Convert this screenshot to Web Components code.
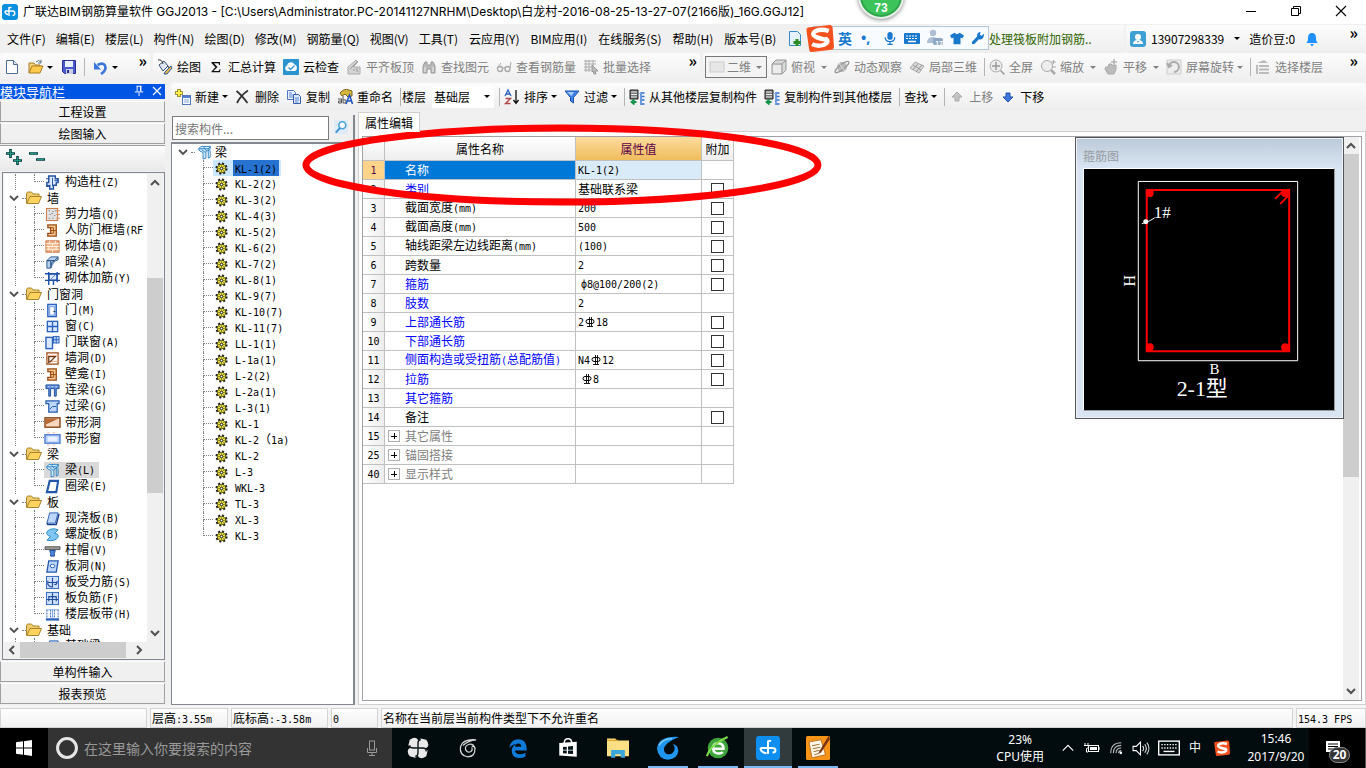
<!DOCTYPE html>
<html lang="zh-CN">
<head>
<meta charset="utf-8">
<title>广联达BIM钢筋算量软件 GGJ2013</title>
<style>
html,body{height:100%;margin:0}
body{font:12px/16px "Noto Sans CJK SC",sans-serif;color:#000;background:#f0f0f0;overflow:hidden}
</style>
</head>
<body>
<ggj-app></ggj-app>
<script>
const ICONS = {
app:'<rect width="16" height="16" rx="3" fill="#0b8fe0"/><path d="M7 3v9M3 7h7.500a2.300 2.300 0 0 1 0 4.600M9.500 3.500Q7 3 7 5.500M3 7q0 3 3 3.500" fill="none" stroke="#fff" stroke-width="1.400"/>',
doc:'<path d="M2.500 1.500h7l4 4v9h-11z" fill="#fff" stroke="#4a6a94"/><path d="M9.500 1.500v4h4" fill="#dbe7f5" stroke="#4a6a94"/>',
open:'<path d="M1 14V4h5l1.500 2H12v2" fill="#f7d57a" stroke="#a87a22"/><path d="M1 14l3-7h11l-3 7z" fill="#ffc94d" stroke="#a87a22"/><path d="M8 3q3-3 5 0M13 .800V4h-3" fill="none" stroke="#5d7486"/>',
save:'<path d="M1.500 1.500h13v13h-11l-2-2z" fill="#4a5bd0" stroke="#2b2f96"/><rect x="4" y="2" width="8" height="6" fill="#e8f0ff"/><rect x="5" y="10" width="7" height="5" fill="#c9cfe0"/><rect x="6" y="11" width="2" height="3" fill="#2b2f96"/>',
undo:'<path d="M8 15q6-4 4-8.500Q10 3 4.500 6" fill="none" stroke="#3b76d8" stroke-width="2.600"/><path d="M1 3v7.500h7z" fill="#3b76d8"/>',
draw:'<path d="M2 6l5-4 4 5-5 5z" fill="#dfe9f4" stroke="#3b4f70"/><path d="M1 1q4-1 5 4M11 7q2 2 1 5" fill="none" stroke="#333"/><path d="M8 13l6-6 1 2-5 6H7z" fill="#f0b93c" stroke="#265aa5"/>',
sigma:'<path d="M3.500 3h8.500v3h-.800L10.500 4.300H6L9.500 8 5.500 12h5.300l.900-1.800h.800L12 13.300H3.500V12.500L7.300 8.300 3.500 4z" fill="#111"/>',
cloud:'<rect width="16" height="16" rx="1" fill="#2c93d1"/><path d="M4 12a3 3 0 0 1 0-5.500 4 4 0 0 1 7.500-1A3.500 3.500 0 0 1 12 12z" fill="#fff"/><path d="M5.500 8.500l2 2 4-4" stroke="#2c93d1" fill="none" stroke-width="1.300"/>',
slab:'<path d="M2 8L10 1l2 2-5 5h7v7H2z" fill="#d4d4d4" stroke="#aaa"/><path d="M4 10l7-7M8 12v-2M11 13V9" stroke="#999"/>',
bino:'<path d="M2 14V7l2-4h2v3h4V3h2l2 4v7h-4v-4H6v4z" fill="#bbb" stroke="#999"/><path d="M4 8v5M12 8v5" stroke="#eee"/>',
glass:'<circle cx="4" cy="10" r="2.500" fill="none" stroke="#aaa" stroke-width="1.400"/><circle cx="11.500" cy="10" r="2.500" fill="none" stroke="#aaa" stroke-width="1.400"/><path d="M6.500 9h2.500M2 8l3-4M14 9l1-6" stroke="#aaa" fill="none"/>',
batch:'<path d="M1 2h12M1 5h12M1 8h8M1 11h7M3 1v12M6 1v12M10 1v6" stroke="#aaa" fill="none"/><path d="M9 6l6 6-3 0 1 3-2 0-1-3-1 1z" fill="#bbb" stroke="#999"/>',
flat:'<rect x="1" y="3" width="14" height="10" fill="#e6e6e6" stroke="#ccc"/>',
cube:'<path d="M1 5l4-4h10v10l-4 4H1z" fill="#d9d9d9" stroke="#999"/><path d="M1 5h10v10M11 5l4-4" stroke="#999" fill="none"/><rect x="2" y="6" width="8" height="8" fill="#ececec"/>',
orbit:'<circle cx="8" cy="8" r="5" fill="#bbb"/><ellipse cx="8" cy="8" rx="8.500" ry="2.500" transform="rotate(-38 8 8)" fill="none" stroke="#999" stroke-width="1.300"/><path d="M5 4l6 8" stroke="#ddd"/>',
part3d:'<path d="M1 9l5-6 9 4-5 7z" fill="#d8d8d8" stroke="#aaa"/><path d="M4 6l8 5M3.500 11l6-6.500M7 13l6-7" stroke="#999"/>',
full:'<circle cx="7" cy="7" r="6" fill="#eee" stroke="#aaa"/><path d="M7 3v8M3 7h8M11.500 11.500l4 4" stroke="#999" stroke-width="1.500"/>',
zoom:'<circle cx="7" cy="7" r="5.500" fill="#eee" stroke="#aaa"/><path d="M11 11l4 4" stroke="#aaa" stroke-width="2.500"/><path d="M11 3h5M13.500 1v4M12 8h4" stroke="#aaa"/>',
pan:'<path d="M2 10q0-3 3-2l1-3q3-1 4 2l3-1q1 4-2 9H5z" fill="#bbb" stroke="#aaa"/><path d="M11 0v6M8 3h6" stroke="#999"/>',
rot:'<path d="M1 1h14v14H1z" fill="#ededed" stroke="#ccc"/><path d="M3 7a5 5 0 1 1 5 6M1 4l2 4 3-2" fill="none" stroke="#aaa" stroke-width="2"/>',
floors:'<path d="M2 4l7-3 4 3zM4 6h10v2H4zM4 9.500h10v2H4zM4 13h10v2H4zM1 6h2v9H1z" fill="#bbb"/>',
add:'<path d="M4 0v8M0 4h8" stroke="#8a7a20" stroke-width="3.600"/><path d="M4 .800v6.400M.800 4h6.400" stroke="#fff04a" stroke-width="1.800"/><rect x="7.500" y="6.500" width="8" height="9" fill="#f4f8ff" stroke="#5078b8"/><path d="M8 8h7" stroke="#4a7ed0" stroke-width="2"/><path d="M9 11h5M9 13h5" stroke="#8aa8d8"/>',
del:'<path d="M1.500 2q5 4 11 12M13 1.500Q6 6 2 14" stroke="#333" stroke-width="1.800" fill="none"/>',
copy:'<path d="M1.500 1.500h6l2 2v7h-8z" fill="#e8f0ff" stroke="#4f78c4"/><path d="M7.500 5.500h5l2 2v7h-7z" fill="#dbe8ff" stroke="#355fae"/><path d="M3 4h3M3 6h4M3 8h4M9 9h4M9 11h4M9 13h3" stroke="#5d86d0"/>',
rename:'<path d="M3 4q4-5 9-3l3 1v5l-4 1-3-3-3 2z" fill="#d8b63c" stroke="#7a6420"/><path d="M1 10h3.500v4H1.500v-2H4M6 7v7h3v-3H6" fill="none" stroke="#555"/><path d="M9 15l3.500-9 3 9M10.500 12h4" fill="none" stroke="#2458c0" stroke-width="1.600"/>',
sort:'<path d="M1 7l3-6 3 6M2 5h4" fill="none" stroke="#2f62bd" stroke-width="1.300"/><path d="M1.500 9.500h5l-5 5h5" fill="none" stroke="#b04a4a" stroke-width="1.400"/><path d="M12 1v12M9.500 11l2.500 3.500L14.500 11" fill="none" stroke="#111" stroke-width="1.300"/>',
filter:'<path d="M1 2h14L9.500 8.500V14L6.500 12V8.500z" fill="#3b82e6" stroke="#1d54ac"/><path d="M3 3h7L7.500 7z" fill="#a9ccff"/>',
cpfrom:'<path d="M1 1h8v9H1z" fill="#777" stroke="#222"/><path d="M2 3h6M2 5.500h6M2 8h6" stroke="#eee"/><path d="M15.500 4H12v11h3.500M12 7.500h3.500M12 11h3.500" fill="none" stroke="#2d6fcb" stroke-width="1.700"/><path d="M9 5l3-1v11" stroke="#8fb8ee" fill="none"/><path d="M7.500 13H3M5.500 10.500L2.500 13l3 2.500" stroke="#169447" stroke-width="1.800" fill="none"/>',
up:'<path d="M8 3l5 5h-3v4H6V8H3z" fill="#c4c4c4" stroke="#aaa"/>',
down:'<path d="M8 13L3 8h3V4h4v4h3z" fill="#3f77e0" stroke="#2350aa"/>',
docadd:'<path d="M2.500 .500h8l3 3v11h-11z" fill="#e5f2ff" stroke="#3b8ac8"/><path d="M10 8v7M6.500 11.500h7" stroke="#2a8c22" stroke-width="3"/>',
user:'<rect width="16" height="16" rx="3" fill="#3d9fd2"/><circle cx="8" cy="6" r="3" fill="#fff"/><path d="M3 13q0-4 5-4t5 4z" fill="#fff"/><path d="M7 10l1 2 1-2" fill="#3d9fd2"/>',
bell:'<path d="M2 12q2-1 2-5 0-5 4-5t4 5q0 4 2 5z" fill="#1e90ff"/><path d="M6 13h4l-2 2.500z" fill="#1e90ff"/>',
beam:'<path d="M1.500 4l3-2.500h10l-1 4-4 1V14l-3 1V8L3 6.500z" fill="#d3ecfb" stroke="#2d83c4"/><path d="M2 4h10l2-2M12 4v10l2-1V6M5 5l4 3M7 2l3 4" fill="none" stroke="#2d83c4"/>',
gear:'<circle cx="8" cy="8" r="5.200" fill="none" stroke="#222" stroke-width="2.600" stroke-dasharray="2.040 2.040"/><circle cx="8" cy="8" r="4.500" fill="#f1e53c" stroke="#3a3a10" stroke-width=".900"/><path d="M8 4v8M4 8h8M5.200 5.200l5.600 5.600M10.800 5.200l-5.600 5.600" stroke="#6b6520" stroke-width=".700"/><circle cx="8" cy="8" r="1.400" fill="#fff" stroke="#222"/>',
folder:'<path d="M.500 13.500V3.500l1-1.500h4l1.500 2H13v3" fill="#f1cd6a" stroke="#a8842e"/><path d="M.800 13.500L4 6.500h11.500l-3 7z" fill="#ffd35e" stroke="#a8842e"/>',
column:'<path d="M4 1h7v3h3v4h-2v3H9v4H5v-3H2V8h2z" fill="#dfeafc" stroke="#22529f" stroke-width="1.500"/><path d="M1 4h4M1 11h5M10 6h5M8 3v9" stroke="#22529f"/>',
wall:'<rect x="1.500" y="1.500" width="12" height="13" fill="#e2e2e2" stroke="#c66f38"/><path d="M4 4h1M8 5h1M5 8h1M10 9h1M4 12h1M8 12h1M11 4h1M7 7h1" stroke="#555"/><path d="M12 4h4M12 8h4M12 12h4" stroke="#e28d58"/>',
frame:'<path d="M3 2h9v12H3v-3h3V5H3z" fill="#f6c590" stroke="#9a4d16" stroke-width="1.400"/><path d="M6 5h3M6 11h3M6 8h6M9 5v6" stroke="#9a4d16"/>',
brick:'<rect x="1" y="2" width="14" height="12" fill="#f3b485" stroke="#c46a34"/><path d="M1 5h14M1 8h14M1 11h14M5 2v3M11 2v3M8 5v3M4 8v3M12 8v3M8 11v3" stroke="#fff4e8"/>',
hbeam:'<path d="M2 6l4-4h8l-4 4zM2 6h8v0H6v8H2z" fill="#b7d2ee" stroke="#2a5488"/><path d="M6 14l1-1V8l7-3V2" fill="#7d9dc4" stroke="#2a5488"/>',
rein:'<path d="M0 3h16M0 10h16M4 1v14M9 8v7M13 1v11" stroke="#1d4fa8" stroke-width="1.500"/><rect x="4.500" y="3.500" width="8" height="6" fill="#dce8fb" stroke="#1d4fa8"/><path d="M6 9l5-5" stroke="#5d8ad8"/>',
door:'<rect x="3" y="1.500" width="9" height="13" fill="#cfe1fb" stroke="#2b62bd" stroke-width="1.500"/><rect x="5" y="4" width="5" height="9" fill="#fff" stroke="#6b98dd"/><path d="M9 9h2" stroke="#123"/>',
window:'<rect x="2.500" y="2.500" width="11" height="11" fill="#d7e8ff" stroke="#2b62bd" stroke-width="1.400"/><path d="M8 2v12M2 8h12" stroke="#2b62bd" stroke-width="1.400"/>',
doorwin:'<rect x="1" y="2.500" width="7" height="12" fill="#dbe9ff" stroke="#2b62bd" stroke-width="1.500"/><rect x="9" y="1.500" width="6" height="7" fill="#b3cff8" stroke="#2b62bd"/><path d="M12 1v8M9 5h6" stroke="#2b62bd"/>',
hole:'<rect x="2" y="2" width="12" height="12" fill="#fff" stroke="#a05420" stroke-width="1.400"/><path d="M1 5h14M1 11h14" stroke="#eaa277"/><path d="M4 13V6h8M5 12l6-6" fill="none" stroke="#6e3b18" stroke-width="1.400"/>',
lbeam:'<path d="M1 2h14v4h-3v8h-2V6H6v8H4V6H1z" fill="#5f8fd8" stroke="#1f4c9c"/><path d="M3 4h2M7 4h2M11 4h2" stroke="#cfe0ff"/>',
obeam:'<path d="M1 2h14v3h-2v9H4V5H1z" fill="#bcd5f8" stroke="#245bb0" stroke-width="1.300"/><path d="M5 11l3-3h4" fill="none" stroke="#245bb0"/>',
strip:'<rect x="0" y="3" width="16" height="10" fill="#f7d7bf" stroke="#8c4516" stroke-width="1.500"/><path d="M1 10L14 4v0H1z" fill="#b96a34"/>',
stripw:'<rect x="0" y="4" width="16" height="9" fill="#bcd2f8" stroke="#4f7fd6" stroke-width="1.500"/><rect x="3" y="6" width="10" height="5" fill="#eaf2ff"/><path d="M2 2h3M8 2h3M2 15h3M8 15h3" stroke="#f3b296"/>',
ring:'<path d="M5 2h9l-2 12H2z" fill="#fff" stroke="#2156a8" stroke-width="2.200"/>',
plate:'<path d="M5 2h9l-3 11H2z" fill="#bcd6fb" stroke="#2559b0"/><path d="M2 13l1 1.500h9L15 3" fill="none" stroke="#173f86" stroke-width="1.500"/>',
spiral:'<path d="M2 5q5-5 12-2l-4 4q5 0 4 4-4 5-12 3l4-4Q1 9 2 5z" fill="#7fc6f2" stroke="#2489c8"/>',
cap:'<path d="M0 4h16v3H0z" fill="#999" stroke="#555"/><path d="M5 8h6l-1 3v3H6v-3z" fill="#4f86dd" stroke="#1d4b9a"/>',
phole:'<path d="M4 2h10l-2 12H2z" fill="#bcd6fb" stroke="#2559b0" stroke-width="1.400"/><ellipse cx="8" cy="7.500" rx="2.500" ry="1.800" fill="#fff" stroke="#2559b0"/>',
force:'<rect x="1.500" y="1.500" width="13" height="13" fill="#cfe0fb" stroke="#2b62bd"/><path d="M8 3v10M3 8h10M3 6v4q2 3 5 3M13 6q0 5-3 4" fill="none" stroke="#1f4c9c" stroke-width="1.200"/>',
neg:'<rect x="1.500" y="1.500" width="13" height="13" fill="#cfe0fb" stroke="#2b62bd"/><path d="M8 2v12M4 11V6h8v5M2 9h12" fill="none" stroke="#1f4c9c" stroke-width="1.200"/>',
band:'<rect x="1" y="12" width="14" height="2.500" fill="#2b62bd"/><path d="M2 3v8M6 3v8M10 3v8M14 3v8" stroke="#245bb0" stroke-dasharray="2 1"/><path d="M1 3h14M8 3v9" stroke="#7aa3e4"/>',
search:'<rect width="16" height="16" fill="#dfecf8"/><circle cx="9.500" cy="6" r="4" fill="#fff" stroke="#4ba3de" stroke-width="1.900"/><path d="M7 9l-5 5.500" stroke="#3b95d6" stroke-width="2.300"/>',
pin:'<path d="M5.500 3v6M9.500 3v6M5 3.500h5M3 9.500h9M7.500 10v4" stroke="#fff" fill="none"/><path d="M9 3v6" stroke="#fff"/>',
x:'<path d="M4 4l8 8M12 4l-8 8" stroke="#fff" stroke-width="1.200"/>',
chev:'<path d="M4 6l4 4 4-4" fill="none" stroke="#505050" stroke-width="1.800"/>',
win:'<path d="M0 2.300L7 1.300V7.500H0zM8 1.200L16 0V7.500H8zM0 8.500h7v6.200L0 13.700zM8 8.500h8V16l-8-1.200z" fill="#fff"/>',
circle:'<circle cx="8" cy="8" r="6.300" fill="none" stroke="#e6e6e6" stroke-width="2"/>',
mic:'<rect x="5.500" y="1" width="5" height="9" fill="none" stroke="#999"/><path d="M3.500 8v4.500h9V8M8 12.500V15M5 15.500h6" fill="none" stroke="#999"/>',
fan:'<g fill="#e9e9e9"><path d="M2 2q4-3 6 0v6Q2 8 1 6z"/><path d="M14 2q3 4 0 6H8Q8 2 10 1z"/><path d="M14 14q-4 3-6 0V8q6 0 7 2z"/><path d="M2 14q-3-4 0-6h6q0 6-2 7z"/></g><path d="M8 8V4.500Q8 2 10 2M8 8h3.500Q14 8 14 10.500M8 8v3.500Q8 14 6 14M8 8H4.500Q2 8 2 6" fill="none" stroke="#121a1c" stroke-width="1"/>',
swirl:'<path d="M14.500 1.500Q4 .500 2 7q-1 7 5.500 8 6.500 0 6-6.500Q13 4.500 9 5 5.500 6 6 9q1 3 4 2 2-1 1-3.500M14.500 1.500Q8 2 4 6M14 8.500q-1-2-3-2" fill="none" stroke="#d8d8d8" stroke-width="1"/>',
edge:'<path d="M1 8Q2 1 8.500 1 15 1.500 15 9v1H5.500q.500 3 4 3 2.500 0 4.500-1.200v3Q12 16 9 16q-6.500-.500-6-6.500Q3.500 6 7 4.500 3 5 1 8zM5.500 7h5.200Q10.500 4.300 8.200 4.300 6 4.500 5.500 7z" fill="#0f7bd8" fill-rule="evenodd"/>',
store:'<path d="M1 4l14-1v12L1 14z" fill="#fff"/><path d="M5 4q0-3.500 3-3.500T11 4" fill="none" stroke="#fff" stroke-width="1.200"/><path d="M4 7.200l3-.300V9.300H4zM8 6.800l4-.400v2.900H8zM4 10h3v2.400l-3-.200zM8 10h4v2.800l-4-.300z" fill="#07141a"/>',
explorer:'<path d="M0 1h6l1 1.500h9V14H0z" fill="#fbdf84"/><path d="M0 2.500h8" stroke="#e2a92d"/><path d="M3 15V9.500h10V15h-3v-2.500H6V15z" fill="#3aa6dc"/>',
gblue:'<path d="M16 0Q1-1 0 8.500 1 16 8 16.500 15 16 15.500 10 15 5.500 11.500 5q2 2 1 5-1.500 3-4.500 2.500Q5 12 5 8.500 6 4 16 0z" fill="#2196f0"/><path d="M1.500 6Q4 1.500 11 1.200" stroke="#83d2ff" fill="none"/>',
ie:'<circle cx="8" cy="8" r="7.500" fill="#3fa43b"/><path d="M4 8.500h8Q12 4.500 8 4.500T4.500 9q.500 3 4 3 2 0 3-1" fill="none" stroke="#fff" stroke-width="1.800"/><path d="M0 14Q2 6 15 0" fill="none" stroke="#7ddc4e" stroke-width="1.500"/>',
gapp:'<rect width="16" height="16" rx="2" fill="#0d8ff2"/><path d="M8 3v9M3 8h7.500Q13 8 13 9.500T11 11M10 3.500Q8 2.500 8 5M3 8q0 3 4 3.500" fill="none" stroke="#fff" stroke-width="1.300"/>',
note:'<rect width="16" height="16" rx="1" fill="#f79418"/><path d="M2 4l8-1.500 3 10-9 2z" fill="#fff8e8" stroke="#a85d10" stroke-width=".500"/><path d="M4 6.500l5-1M4.500 8.500l5-1M5 10.500l4-1M5.500 12.500l3-.800" stroke="#a97a40" stroke-width=".700"/><path d="M15 0L9 10l-1 2 2-1 6-9z" fill="#7b3514"/>',
caret:'<path d="M2 11l6-6 6 6" fill="none" stroke="#fff" stroke-width="1.300"/>',
bat:'<rect x="4.500" y="5.500" width="10" height="6" fill="none" stroke="#fff"/><rect x="6" y="7" width="7" height="3" fill="#fff"/><path d="M15 7v3M1 3v2M4 3v2M0 5.500h5q0 3-2.500 3V12H4" stroke="#fff" fill="none"/>',
wifi:'<path d="M2 14Q2 2 14 2M5 14Q5 5 14 5M8 14q0-6 6-6M11 14q0-3 3-3" fill="none" stroke="#bbb" stroke-width="1.200"/><circle cx="13.500" cy="13.500" r="1.500" fill="#fff"/>',
vol:'<path d="M1 6h3l4-4v12l-4-4H1z" fill="none" stroke="#fff"/><path d="M10 5.500q2 2.500 0 5M12 4q3 4 0 8M14 2.500q4 5.500 0 11" fill="none" stroke="#ddd"/>',
sogou:'<path d="M1 2L13.500 .500Q15 .500 15.200 2L16 13q0 1.500-1.500 1.700L3.500 16Q2 16 1.800 14.500L.300 4Q0 2.300 1 2z" fill="#f4511e"/><path d="M13 4Q9 2.500 5.500 4 2.500 6 6 7.500t5.500 1.200Q13.500 10.500 10 12q-3.500 1-6.500-.500" fill="none" stroke="#fff" stroke-width="2.500"/>',
mici:'<rect x="5" y="1" width="6" height="9" rx="3" fill="#1878cc"/><path d="M2.500 7q0 5 5.500 5t5.500-5M8 12v3M5 15.300h6" fill="none" stroke="#1878cc" stroke-width="1.400"/>',
kb:'<rect y="3" width="16" height="11" rx="1" fill="#1878cc"/><path d="M2 6h12M2 8.500h12" stroke="#fff" stroke-dasharray="2 1"/><path d="M4 11.500h8" stroke="#fff" stroke-width="1.500"/>',
person:'<circle cx="6" cy="4" r="3.200" fill="#aebfd4"/><path d="M0 14q0-6 6-6t6 6z" fill="#aebfd4"/><rect x="6" y="9" width="10" height="7" rx="2" fill="#8fa6c2"/>',
shirt:'<path d="M5 2q3 3 6 0l5 3-2 3.500-2-1V15H4V7.500l-2 1L0 5z" fill="#1878cc"/>',
wrench:'<path d="M14.800 3L12 5.500 10 4l1-3Q7 1 7 5q0 1-.300 1.700L1 12.500Q.500 15 3.500 15L9 9.500q6 .800 5.800-6.500z" fill="#1878cc"/>',
msg:'<path d="M1 1h14v11H8l-3 3v-3H1z" fill="#fff"/><path d="M3 4h10M3 6.500h10M3 9h7" stroke="#000"/>',
softkb:'<rect x=".500" y="3" width="15" height="10" fill="none" stroke="#fff"/><path d="M2.500 5.500h11M2.500 8h11" stroke="#fff" stroke-dasharray="1 1"/><path d="M4 10.500h8" stroke="#fff"/>',
expand:'<path d="M4.500 0v9M0 4.500h9" stroke="#003c3c" stroke-width="2.600"/><path d="M4.500 1v7M1 4.500h7" stroke="#1c9a86"/><path d="M11.500 7v9M7 11.500h9" stroke="#003c3c" stroke-width="2.600"/><path d="M11.500 8v7M8 11.500h7" stroke="#1c9a86"/>',
shrink:'<path d="M0 4.500h9M7 10.500h9" stroke="#003c3c" stroke-width="2.600"/><path d="M1 4.500h7M8 10.500h7" stroke="#1c9a86"/>',
wmin:'<path d="M3 8.500h10" stroke="#000"/>',
wmax:'<path d="M3.500 5.500h7v7h-7zM5.500 5V3.500h7v7H11" fill="none" stroke="#000"/>',
wclose:'<path d="M3 3l10 10M13 3L3 13" stroke="#000" stroke-width="1.100"/>'
};

// Common base: an element with its styles and markup in an open shadow root.
class Part extends HTMLElement {
  connectedCallback() {
    if (this.shadowRoot) return;
    this.attachShadow({mode: 'open'}).innerHTML =
      `<style>*{box-sizing:border-box}:host{box-sizing:border-box}${this.constructor.css}</style>${this.html()}`;
  }
  at(n, d = '') { return this.getAttribute(n) ?? d; }
}
// Song-style labels set the half-width characters in a monospaced face.
const mix = s => s.replace(/[\x20-\x7e]+/g, m => `<span class="a">${m}</span>`);
const MIX = '.a{font:10px/16px "DejaVu Sans Mono",monospace;white-space:pre}';
const BTN = 'button{font:inherit;color:inherit;border:0;background:none;padding:0;margin:0}';
const ic = (n, s = 16) => `<ui-icon name="${n}" size="${s}"></ui-icon>`;

customElements.define('ui-icon', class extends Part {
  static css = ':host{display:inline-block;flex:none}svg{display:block;overflow:visible}';
  html() { const s = this.at('size', '16');
    return `<svg width="${s}" height="${s}" viewBox="0 0 16 16" aria-hidden="true">${ICONS[this.at('name')]}</svg>`; }
});

customElements.define('tool-button', class extends Part {
  static css = BTN + `:host{display:block;flex:none;margin-left:7px}:host([disabled]){color:#808080}
    button{display:flex;align-items:center;gap:4px;white-space:nowrap;height:22px}
    i{border:3px solid transparent;border-top-color:currentColor;border-bottom:0;margin-left:-1px}
    :host([split]) i{margin:0 0 0 2px}`;
  html() { return `<button type="button" ${this.hasAttribute('disabled') ? 'disabled style="color:#808080"' : ''} aria-label="${this.at('label', this.at('icon'))}">${
    this.at('icon') ? ic(this.at('icon')) : ''}${this.at('label') ? `<span>${this.at('label')}</span>` : ''}${
    this.hasAttribute('drop') ? '<i></i>' : ''}</button>`; }
});

customElements.define('tool-bar', class extends Part {
  static css = BTN + `:host{display:flex;align-items:center;height:28px;min-width:0;border-radius:3px;
    background:linear-gradient(#fcfcfc,#eeeeee)}
    .more{margin:0 3px 14px auto;font:bold 16px/12px "Noto Sans CJK SC",sans-serif;padding:0}
    :host([edge]) .more{margin-right:8px}`;
  html() { return `<slot></slot>${this.hasAttribute('more') ? '<button class="more" type="button" aria-label="更多">»</button>' : ''}`; }
});

customElements.define('tool-sep', class extends Part {
  static css = ':host{display:block;flex:none;width:1px;height:18px;background:#b4b4b4;margin-left:7px}';
  html() { return ''; }
});

customElements.define('tool-select', class extends Part {
  static css = `:host{display:block;flex:none}label{display:flex;align-items:center;gap:6px}
    div{display:flex;align-items:center;position:relative;background:#fff;height:22px;width:62px}
    select{appearance:none;border:0;background:none;font:inherit;color:inherit;padding:0 0 0 2px;width:100%;height:20px}
    i{position:absolute;right:4px;border:3px solid transparent;border-top-color:currentColor;border-bottom:0;pointer-events:none}
    :host([framed]) div{border:1px solid #777;background:#f3f3f3;color:#808080;padding-left:3px}
    :host([framed]) select{color:#808080;opacity:1}`;
  html() { const f = this.hasAttribute('framed');
    return `<label>${f ? '' : this.at('label')}<div>${f ? ic('flat', 16) : ''}<select aria-label="${this.at('label')}" ${f ? 'disabled' : ''}><option>${this.at('value')}</option></select><i></i></div></label>`; }
});

customElements.define('title-bar', class extends Part {
  static css = BTN + `:host{display:flex;align-items:center;height:24px;background:#fff;padding:0 17px 0 2px;gap:5px;flex:none}
    h1{flex:1;margin:0;font:12px/20px Inter,"Noto Sans CJK SC",sans-serif;white-space:nowrap;overflow:hidden}
    nav{display:flex;gap:29px;margin-bottom:3px}button{height:16px}`;
  html() { return `${ic('app')}<h1><slot></slot></h1><nav><button aria-label="最小化">${ic('wmin')}</button><button aria-label="还原">${ic('wmax')}</button><button aria-label="关闭">${ic('wclose')}</button></nav>`; }
});

customElements.define('menu-bar', class extends Part {
  static css = BTN + `:host{display:flex;height:29px;align-items:center;flex:none}
    nav{display:flex;gap:10px;padding-left:7px;align-items:center}
    a{color:#000;text-decoration:none;white-space:nowrap}
    nav a:nth-child(n+9){padding-right:1px}
    .news{margin-left:auto;width:186px;padding-left:51px;color:#2f6400;height:28px;line-height:28px;overflow:hidden;background:linear-gradient(#fafafa,#eee)}
    .news a{color:inherit}
    tool-bar{width:240px;margin-left:2px}
    tool-bar button{display:flex;align-items:center;white-space:nowrap;gap:5px;margin-left:4px}
    i{border:3px solid transparent;border-top-color:#000;border-bottom:0;margin:0 5px}
    .bean{margin:0 9px 0 4px}`;
  html() { return `<nav>${['文件(F)','编辑(E)','楼层(L)','构件(N)','绘图(D)','修改(M)','钢筋量(Q)','视图(V)','工具(T)','云应用(Y)','BIM应用(I)','在线服务(S)','帮助(H)','版本号(B)'].map(t => `<a href="#">${t}</a>`).join('')}${ic('docadd')}</nav>
    <div class="news"><a href="#">处理筏板附加钢筋..</a></div>
    <tool-bar more edge><button type="button">${ic('user')}<span>13907298339</span><i></i></button><span class="bean">造价豆:0</span>${ic('bell')}</tool-bar>`; }
});

customElements.define('scroll-bar', class extends Part {
  static css = BTN + `:host{display:flex;flex-direction:column;background:#f0f0f0;width:16px;flex:none}
    button{width:16px;height:17px;flex:none}svg{display:block}
    .t{background:#cdcdcd}
    :host([flat]){flex-direction:row;width:auto;height:16px}`;
  html() { const h = this.hasAttribute('flat'), [a, b, c] = this.at('parts').split(' ');
    const arrow = d => `<button type="button" aria-label="滚动"><svg width="16" height="17"><path d="${d}" fill="none" stroke="#505050" stroke-width="2"/></svg></button>`;
    return arrow(h ? 'M10 4l-4 4 4 4' : 'M4 11l4-4 4 4') + `<div style="flex:${a}"></div><div class="t" style="flex:${b}"></div><div style="flex:${c}"></div>` + arrow(h ? 'M6 4l4 4-4 4' : 'M4 6l4 4 4-4'); }
});

const MODULES = [['*','column','构造柱(Z)',1],['墙'],['*','wall','剪力墙(Q)'],['*','frame','人防门框墙(RF'],['*','brick','砌体墙(Q)'],['*','hbeam','暗梁(A)'],['*','rein','砌体加筋(Y)',1],
['门窗洞'],['*','door','门(M)'],['*','window','窗(C)'],['*','doorwin','门联窗(A)'],['*','hole','墙洞(D)'],['*','frame','壁龛(I)'],['*','lbeam','连梁(G)'],['*','obeam','过梁(G)'],['*','strip','带形洞'],['*','stripw','带形窗',1],
['梁'],['*','beam','梁(L)',0,1],['*','ring','圈梁(E)',1],
['板'],['*','plate','现浇板(B)'],['*','spiral','螺旋板(B)'],['*','cap','柱帽(V)'],['*','phole','板洞(N)'],['*','force','板受力筋(S)'],['*','neg','板负筋(F)'],['*','band','楼层板带(H)',1],
['基础'],['*','plate','基础梁(F)']];
const TREE = MIX + `ul{list-style:none;margin:0;padding:0}
  li{display:flex;align-items:center;height:16px;white-space:nowrap}
  .v{width:19px;height:16px;border-left:1px dotted #808080;flex:none}
  .e{width:10px;flex:none}.e i{display:block;height:8px;border-left:1px dotted #808080}
  .e i:first-child{border-bottom:1px dotted #808080}.last i:last-child{border:0}
  .d{width:4px;border-top:1px dotted #808080;flex:none}`;

customElements.define('module-tree', class extends Part {
  static css = TREE + `:host{display:grid;grid-template-columns:1fr 16px;grid-template-rows:1fr 16px;border:1px solid #828790;background:#f0f0f0;padding:1px;min-height:0}
    ul{background:#fff;overflow:hidden;min-height:0}
    li{padding-left:11px}li.g{padding-left:2px}
    .g .t{padding-left:5px}
    .s{display:flex;align-items:center;padding:0 4px 0 1px;height:16px}.sel{background:#d9d9d9}
    .s .t{padding-left:5px}`;
  html() { return `<ul>${MODULES.map(m => m[0] !== '*'
    ? `<li class="g">${ic('chev')}<span class="d"></span>${ic('folder')}<span class="t">${m[0]}</span></li>`
    : `<li><span class="v"></span><span class="e ${m[3] ? 'last' : ''}"><i></i><i></i></span><span class="s ${m[4] ? 'sel' : ''}">${ic(m[1], 15)}<span class="t">${mix(m[2])}</span></span></li>`).join('')}</ul>
    <scroll-bar parts="86 213 130"></scroll-bar><scroll-bar flat parts="0 102 5"></scroll-bar>`; }
});

customElements.define('module-panel', class extends Part {
  static css = BTN + `:host{display:flex;flex-direction:column;width:165px;flex:none;min-height:0;gap:1px;padding-bottom:1px}
    header{display:flex;align-items:center;height:15px;background:#0055e5;color:#fff;gap:2px;margin:1px 0 1px;line-height:15px}
    h2{flex:1;font:13px/15px "Noto Sans CJK SC",sans-serif;margin:0}
    .b{height:21px;border:1px solid #a0a0a0;border-top-color:#fff;background:#f0f0f0;text-align:center;flex:none;outline:0}
    .tools{display:flex;gap:7px;align-items:center;height:26px;padding:0 6px;background:linear-gradient(#fcfcfc,#e8e8e8);border-top:1px solid #a0a0a0;flex:none}
    module-tree{flex:1;margin-left:2px}`;
  html() { return `<header><h2>模块导航栏</h2><button aria-label="固定">${ic('pin', 15)}</button><button aria-label="关闭">${ic('x')}</button></header>
    <button class="b" type="button">工程设置</button><button class="b" type="button">绘图输入</button>
    <div class="tools"><button aria-label="展开">${ic('expand')}</button><button aria-label="折叠">${ic('shrink')}</button></div>
    <module-tree></module-tree>
    <button class="b" type="button">单构件输入</button><button class="b" type="button">报表预览</button>`; }
});

const PARTS = ['KL-1(2)','KL-2(2)','KL-3(2)','KL-4(3)','KL-5(2)','KL-6(2)','KL-7(2)','KL-8(1)','KL-9(7)','KL-10(7)','KL-11(7)','LL-1(1)','L-1a(1)','L-2(2)','L-2a(1)','L-3(1)','KL-1','KL-2（1a)','KL-2','L-3','WKL-3','TL-3','XL-3','KL-3'];
customElements.define('component-list', class extends Part {
  static css = BTN + TREE + `:host{display:flex;flex-direction:column;width:184px;flex:none;min-height:0;border:1px solid #828790;border-left:0;border-top:0;border-right-width:2px}
    form{display:flex;align-items:center;height:27px;gap:5px;padding:1px 0 2px 1px;flex:none}
    input{flex:1;min-width:0;height:24px;border:1px solid #7a7a7a;font:inherit;padding:0 2px;border-radius:0;background:#fff}
    input::placeholder{color:#777;opacity:1}
    form button{margin-right:5px}
    ul{flex:1;background:#fff;border:1px solid #828790;border-width:2px 0 0 1px;overflow:hidden}
    .root{padding-left:3px}.root .t{padding-left:3px}.root .d{margin-right:2px}
    .leaf{padding-left:31px}.leaf ui-icon{width:17px;padding-left:1px}
    .leaf .t{padding:0 2px;margin-left:3px}
    .leaf .s{display:flex;align-items:center;padding-right:2px}
    .sel{background:#cce8ff}.sel .t{background:#2672d0;height:16px}`;
  html() { return `<form onsubmit="return false"><input aria-label="搜索构件" placeholder="搜索构件..."><button aria-label="搜索">${ic('search', 14)}</button></form>
    <ul><li class="root">${ic('chev')}<span class="d"></span>${ic('beam', 15)}<span class="t">梁</span></li>
    ${PARTS.map((p, i) => `<li class="leaf"><span class="e ${i === PARTS.length - 1 ? 'last' : ''}"><i></i><i></i></span><span class="s ${i ? '' : 'sel'}">${ic('gear', 15)}<span class="t">${mix(p)}</span></span></li>`).join('')}</ul>`; }
});

const BAR = '<svg class="rb" width="10" height="10" viewBox="0 0 10 10" role="img" aria-label="HRB400"><rect x="1" y="2.500" width="8" height="4" rx="2" fill="none" stroke="#000"/><path d="M4.500 0v9M6.500 0v9M2 9.500h6" stroke="#000" stroke-width=".900"/></svg>';
// number, name, value, blue, check box, collapsed group
const ROWS = [[1,'名称','KL-1(2)',0,0],[2,'类别','基础联系梁',1,1],[3,'截面宽度(mm)','200',0,1],[4,'截面高度(mm)','500',0,1],[5,'轴线距梁左边线距离(mm)','(100)',0,1],[6,'跨数量','2',0,1],[7,'箍筋','ф8@100/200(2)',1,1],[8,'肢数','2',1,0],[9,'上部通长筋','2$18',1,1],[10,'下部通长筋','',1,1],[11,'侧面构造或受扭筋(总配筋值)','N4$12',1,1],[12,'拉筋','$8',1,1],[13,'其它箍筋','',1,0],[14,'备注','',0,1],[15,'其它属性','',0,0,1],[25,'锚固搭接','',0,0,1],[40,'显示样式','',0,0,1]];
customElements.define('property-grid', class extends Part {
  static css = BTN + MIX + `:host{display:block}
    table{border-collapse:separate;border-spacing:0;table-layout:fixed;width:371px}
    th,td{border:0 solid #c0c0c0;border-width:0 1px 1px 0;padding:0;height:19px;font-weight:400;overflow:hidden;white-space:nowrap;line-height:16px}
    thead th{height:24px;background:linear-gradient(#fff,#eee)}
    thead .val{background:linear-gradient(#fbdca0,#f0bd5c);color:#600048}
    tbody th{background:linear-gradient(90deg,#fff,#ededed)}
    .nm{padding-left:20px;position:relative}.vl{padding-left:2px}.ck{text-align:center}
    .blue .nm{color:#00f}.grp .nm{color:#808080}
    .grp button{position:absolute;left:3px;top:3px;width:12px;height:12px;border:1px solid #b0b0b0;background:linear-gradient(#000,#000) center/6px 1px no-repeat,linear-gradient(#000,#000) center/1px 6px no-repeat,#fff}
    .cur th{background:#ffd48a;color:#600048}.cur .nm{background:#0078d7;color:#fff}.cur .vl{background:#d9eaf9}
    input{appearance:none;display:block;width:13px;height:13px;border:1px solid #333;background:#fff;margin:0 auto}
    .rb{margin:0 1px;vertical-align:-1px}.in{padding-left:5px}`;
  html() { return `<table><colgroup><col style="width:22px"><col style="width:191px"><col style="width:126px"><col style="width:32px"></colgroup>
    <thead><tr><th></th><th>属性名称</th><th class="val">属性值</th><th>附加</th></tr></thead><tbody>
    ${ROWS.map(([n, name, v, blue, chk, grp]) => `<tr class="${n === 1 ? 'cur' : ''} ${blue ? 'blue' : ''} ${grp ? 'grp' : ''}"><th>${mix(String(n))}</th><td class="nm">${grp ? `<button type="button" aria-label="展开${name}"></button>` : ''}${mix(name)}</td><td class="vl ${/^[ф$]/.test(v) ? 'in' : ''}">${v[0] === 'ф' ? `<span class="a">${v}</span>` : v.split('$').map(mix).join(BAR)}</td><td class="ck">${chk ? `<input type="checkbox" aria-label="附加 ${name}">` : ''}</td></tr>`).join('')}</tbody></table>`; }
});

customElements.define('stirrup-window', class extends Part {
  static css = `:host{display:block;width:269px;border:1px solid #555;padding:9px 8px 7px 7px;background:linear-gradient(#bccad9,#d8e4f2 30px);box-shadow:inset 0 0 0 1px #eef3fa}
    h3{margin:0 0 3px;font:12px/18px "Noto Sans CJK SC",sans-serif;color:#989ca2}
    svg{display:block;width:100%;background:#000;border:1px solid #fff;border-color:#fff #999 #999 #fff}
    text{fill:#fff;font-family:"Liberation Serif","Noto Sans CJK SC",serif}`;
  html() { return `<h3>箍筋图</h3><svg viewBox="0 0 251 242"><path d="M54.500 12.500h160v180h-160z" fill="none" stroke="#fff"/>
    <g fill="none" stroke="#f00" stroke-width="2"><path d="M63 21h143v162H63zM192 30l7-7M197 35l8-8"/></g>
    <g fill="#f00"><circle cx="66" cy="24" r="4"/><circle cx="202" cy="24" r="4"/><circle cx="66" cy="179" r="4"/><circle cx="202" cy="179" r="4"/></g>
    <circle cx="62" cy="53" r="2.500" fill="#fff"/><path d="M58 55l8-3 5-3" stroke="#fff" fill="none"/>
    <text x="70" y="49" font-size="17">1#</text><text transform="translate(51 118) rotate(-90)" font-size="16">H</text><text x="126" y="206" font-size="15">B</text><text x="93" y="228" font-size="22">2-1型</text></svg>`; }
});

customElements.define('property-panel', class extends Part {
  static css = BTN + `:host{display:flex;flex-direction:column;flex:1;min-width:0;margin-left:3px}
    .tab{align-self:flex-start;height:20px;padding:0 6px;background:#fff;border:1px solid #d0d0d0;border-bottom:0;margin-bottom:-1px;z-index:1;flex:none}
    .page{flex:1;min-height:0;border:1px solid #d0d0d0;background:#fff;padding:4px 3px 3px 3px;display:flex}
    .view{flex:1;display:flex;border:1px solid #a0a0a8;position:relative;min-width:0;padding:0 2px 0 0}
    .content{flex:1;min-width:0;overflow:hidden}
    stirrup-window{position:absolute;right:17px;top:0}
    .mark{position:absolute;left:-61px;top:-13px;pointer-events:none}`;
  html() { return `<button class="tab" type="button">属性编辑</button><div class="page"><div class="view"><div class="content"><property-grid></property-grid></div>
    <stirrup-window></stirrup-window><scroll-bar parts="0 322 206"></scroll-bar>
    <svg class="mark" width="520" height="82"><ellipse cx="260" cy="41" rx="256" ry="37" fill="none" stroke="#f00" stroke-width="7"/></svg></div></div>`; }
});

customElements.define('status-bar', class extends Part {
  static css = MIX + `:host{display:flex;gap:3px;height:23px;padding-top:3px;flex:none;background:#f4f4f4}
    span.c{border:1px solid #d4d4d4;background:linear-gradient(#fff,#f0f0f0);padding:1px 1px;white-space:nowrap;overflow:hidden;flex:none}
    .c:nth-of-type(1){width:147px}.c:nth-of-type(2){width:78px}.c:nth-of-type(3){width:97px}.c:nth-of-type(4){width:47px}
    span.c:nth-of-type(5){flex:1}.c:nth-of-type(6){width:70px}`;
  html() { return ['', '层高:3.55m', '底标高:-3.58m', '0', '名称在当前层当前构件类型下不允许重名', '154.3 FPS'].map(t => `<span class="c">${mix(t)}</span>`).join(''); }
});

customElements.define('task-bar', class extends Part {
  static css = BTN + `:host{display:flex;height:40px;flex:none;background:#020b0d;color:#fff;font-size:12px;font-family:"Noto Sans","Noto Sans CJK SC",sans-serif}
    button{height:40px;display:grid;place-items:center;flex:none}
    .start{width:48px;background:#000}
    .find{display:flex;align-items:center;width:344px;background:#333;padding:0 12px 0 7px;gap:5px}
    input{flex:1;min-width:0;background:none;border:0;font:14px "Noto Sans CJK SC",sans-serif;padding:0;color:#fff}
    input::placeholder{color:#999;opacity:1}
    .apps{display:flex;padding-left:2px}.apps button{width:48px;margin-right:2px}
    .apps .run{background:linear-gradient(#7ab8f5,#7ab8f5) bottom/40px 2px no-repeat}
    .apps .on{background:linear-gradient(#7ab8f5,#7ab8f5) bottom/100% 2px no-repeat,#313b3e}
    .tray{display:flex;align-items:center;margin-left:auto;gap:9px}
    .two{text-align:center;line-height:18px;white-space:nowrap}
    .cpu{margin-right:8px;line-height:17px}.sg{margin-left:4px;display:flex}.clock{width:66px;margin-left:4px}.clock{margin-right:-9px}
    .note{width:57px;background:#000;border-right:1px solid #555;position:relative;padding-right:9px}
    .note b{position:absolute;left:20px;top:19px;background:#333;border:1px solid #888;border-radius:9px;width:21px;height:16px;line-height:14px;text-align:center;font-size:12px}`;
  html() { const app = (n, c = '', s = 22) => `<button class="${c}" aria-label="${n}">${ic(n, s)}</button>`;
    return `<button class="start" aria-label="开始">${ic('win')}</button><div class="find">${ic('circle', 24)}<input aria-label="搜索" placeholder="在这里输入你要搜索的内容">${ic('mic')}</div>
    <div class="apps">${app('fan')}${app('swirl', '', 20)}${app('edge', '', 20)}${app('store', '', 20)}${app('explorer')}${app('gblue', 'run')}${app('ie', 'run')}${app('gapp', 'on', 24)}${app('note', 'run', 24)}</div>
    <div class="tray"><div class="two cpu">23%<br>CPU使用</div>${ic('caret', 14)}${ic('bat')}${ic('wifi', 14)}${ic('vol', 17)}${ic('softkb', 22)}<span>中</span><span class="sg">${ic('sogou')}</span><div class="two clock">15:46<br>2017/9/20</div><button class="note" aria-label="通知">${ic('msg')}<b>20</b></button></div>`; }
});

customElements.define('ime-bar', class extends Part {
  static css = `:host{display:flex;align-items:center;gap:7px;height:24px;width:176px;border:1px solid #b5c6da;background:#f8fbff;padding-left:24px;color:#1878cc}
    .logo{position:absolute;left:-8px;top:-3px}b{font-size:14px;line-height:20px;width:14px}
    b+b{font-family:"Noto Sans",sans-serif;margin:0 1px 0 2px}
    .n{position:relative}.n small{position:absolute;right:0;bottom:0;font:bold 7px/8px "Liberation Sans",sans-serif;color:#fff}`;
  html() { return `<span class="logo">${ic('sogou', 28)}</span><b>英</b><b>•,</b>${ic('mici', 14)}${ic('kb')}<span class="n">${ic('person')}<small>17</small></span>${ic('shirt', 14)}${ic('wrench', 14)}`; }
});

customElements.define('speed-ball', class extends Part {
  static css = `:host{display:block;width:46px;height:46px;border-radius:50%;background:#3cc35a;border:2px solid #e8efe8;box-shadow:inset 0 0 0 2px #2ea44b,0 1px 4px #888;
    color:#fff;font:bold 12px/14px "Liberation Sans",sans-serif;text-align:center;padding-top:26px}`;
  html() { return '<slot></slot>'; }
});

customElements.define('ggj-app', class extends Part {
  static css = `:host{display:flex;flex-direction:column;height:100vh;position:relative;overflow:hidden}
    .row{display:flex;gap:3px;flex:none;margin-bottom:2px}
    .files{width:150px}.files tool-button:first-child{margin-left:4px}.files tool-button{margin-left:8px}.edit{width:547px}.edit tool-button:first-child{margin-left:4px}
    .look{flex:1}.look>:first-child{margin-left:2px}
    .look tool-select+tool-button,.look tool-sep+tool-button,.work tool-sep+tool-button{margin-left:4px}
    main{display:flex;flex:1;min-height:0;gap:6px}
    .work{flex:1;display:flex;flex-direction:column;min-width:0}
    .work>tool-bar{height:27px;flex:none;margin-bottom:1px}
    .work tool-button:first-child{margin-left:4px}.work tool-select{margin-left:1px}.work tool-select+tool-sep{margin-left:5px}
    .split{display:flex;flex:1;min-height:0;padding-top:3px}
    .split component-list{margin-top:1px}.split property-panel{margin-top:-2px}
    ime-bar{position:absolute;left:813px;top:26px}
    speed-ball{position:absolute;left:858px;top:-27px}`;
  html() { return `<title-bar>广联达BIM钢筋算量软件 GGJ2013 - [C:\\Users\\Administrator.PC-20141127NRHM\\Desktop\\白龙村-2016-08-25-13-27-07(2166版)_16G.GGJ12]</title-bar>
  <menu-bar></menu-bar>
  <div class="row">
    <tool-bar class="files" more><tool-button icon="doc"></tool-button><tool-button icon="open" drop></tool-button><tool-button icon="save"></tool-button><tool-sep></tool-sep><tool-button icon="undo" drop></tool-button></tool-bar>
    <tool-bar class="edit" more><tool-button icon="draw" label="绘图"></tool-button><tool-button icon="sigma" label="汇总计算"></tool-button><tool-button icon="cloud" label="云检查"></tool-button><tool-button disabled icon="slab" label="平齐板顶"></tool-button><tool-button disabled icon="bino" label="查找图元"></tool-button><tool-button disabled icon="glass" label="查看钢筋量"></tool-button><tool-button disabled icon="batch" label="批量选择"></tool-button></tool-bar>
    <tool-bar class="look" more edge><tool-select framed label="视图模式" value="二维"></tool-select><tool-button disabled split icon="cube" label="俯视" drop></tool-button><tool-button disabled icon="orbit" label="动态观察"></tool-button><tool-button disabled icon="part3d" label="局部三维"></tool-button><tool-sep></tool-sep><tool-button disabled icon="full" label="全屏"></tool-button><tool-button disabled split icon="zoom" label="缩放" drop></tool-button><tool-button disabled split icon="pan" label="平移" drop></tool-button><tool-button disabled icon="rot" label="屏幕旋转" drop></tool-button><tool-sep></tool-sep><tool-button disabled icon="floors" label="选择楼层"></tool-button></tool-bar>
  </div>
  <main><module-panel></module-panel><section class="work">
    <tool-bar><tool-button icon="add" label="新建" drop></tool-button><tool-button icon="del" label="删除"></tool-button><tool-button icon="copy" label="复制"></tool-button><tool-button icon="rename" label="重命名"></tool-button><tool-sep></tool-sep><tool-select label="楼层" value="基础层"></tool-select><tool-sep></tool-sep><tool-button icon="sort" label="排序" drop></tool-button><tool-button icon="filter" label="过滤" drop></tool-button><tool-sep></tool-sep><tool-button icon="cpfrom" label="从其他楼层复制构件"></tool-button><tool-button icon="cpfrom" label="复制构件到其他楼层"></tool-button><tool-sep></tool-sep><tool-button label="查找" drop></tool-button><tool-sep></tool-sep><tool-button disabled icon="up" label="上移"></tool-button><tool-button icon="down" label="下移"></tool-button></tool-bar>
    <div class="split"><component-list></component-list><property-panel></property-panel></div></section></main>
  <status-bar></status-bar><task-bar></task-bar>
  <ime-bar></ime-bar><speed-ball>73</speed-ball>`; }
});
</script>
</body>
</html>
